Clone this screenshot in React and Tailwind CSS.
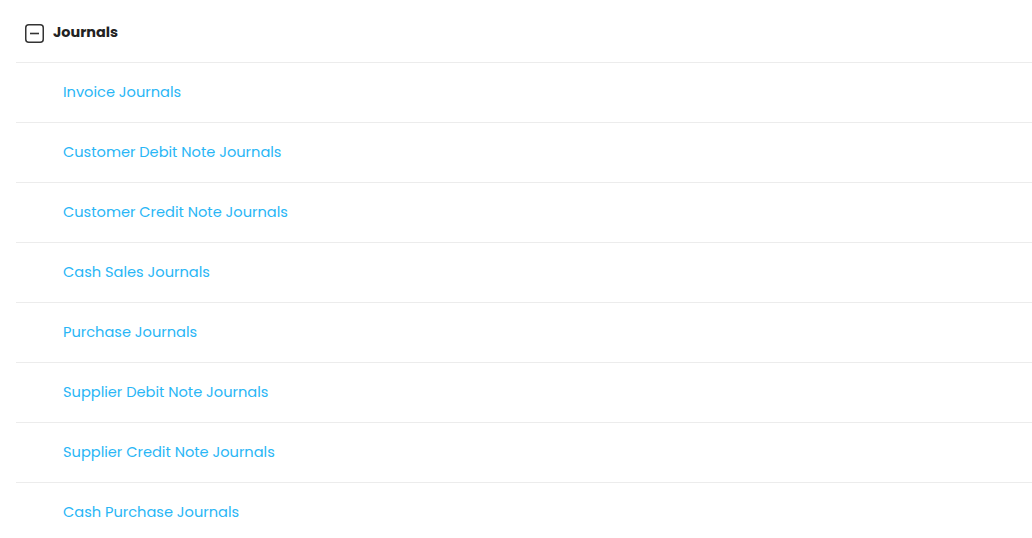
import React from "react";

const items = [
  "Invoice Journals",
  "Customer Debit Note Journals",
  "Customer Credit Note Journals",
  "Cash Sales Journals",
  "Purchase Journals",
  "Supplier Debit Note Journals",
  "Supplier Credit Note Journals",
  "Cash Purchase Journals",
];

export default function App() {
  return (
    <div className="w-[1032px] h-[538px] overflow-hidden bg-white pl-4" style={{ fontFamily: "Poppins, Inter, 'Noto Sans', sans-serif" }}>
      <div className="flex items-center h-[62px] pt-[4px] pl-[9px] gap-[9px]">
        <svg width="19" height="19" viewBox="0 0 19 19" className="shrink-0">
          <rect x="0.75" y="0.75" width="17.5" height="17.5" rx="3" fill="none" stroke="#333" strokeWidth="1.5" />
          <line x1="5" y1="9.5" x2="14" y2="9.5" stroke="#333" strokeWidth="1.6" />
        </svg>
        <span className="text-[14.4px] font-bold text-[#222]">Journals</span>
      </div>
      {items.map((t) => (
        <div key={t} className="h-[60px] border-t border-[#ececec] flex items-center pl-[47px]">
          <span className="text-[14.6px] text-[#29b6f6]">{t}</span>
        </div>
      ))}
    </div>
  );
}
